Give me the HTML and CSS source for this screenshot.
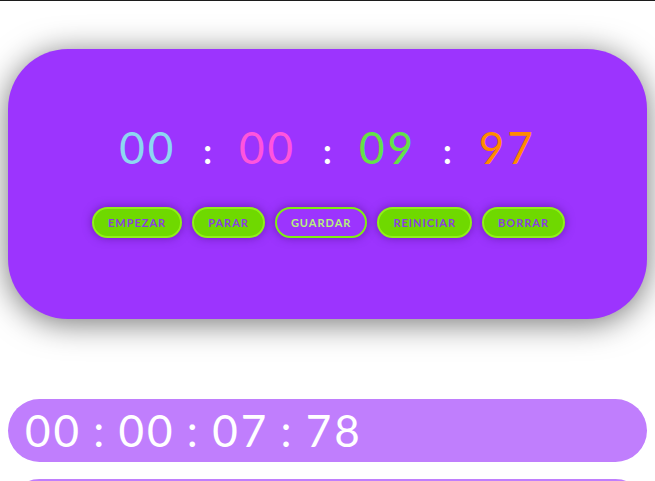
FILE: index.html
```html
<!DOCTYPE html>
<html lang="es">
<head>
<meta charset="utf-8">
<title>Cronómetro</title>
<link rel="stylesheet" href="styles.css">
</head>
<body>
<main class="page">
  <section class="card">
    <div class="clock">
      <span class="num c-blue">00</span>
      <span class="sep">:</span>
      <span class="num c-pink">00</span>
      <span class="sep">:</span>
      <span class="num c-green">09</span>
      <span class="sep">:</span>
      <span class="num c-orange">97</span>
    </div>
    <div class="actions">
      <button class="btn">EMPEZAR</button>
      <button class="btn">PARAR</button>
      <button class="btn btn-outline">GUARDAR</button>
      <button class="btn">REINICIAR</button>
      <button class="btn">BORRAR</button>
    </div>
  </section>
  <ul class="laps">
    <li class="lap">00 : 00 : 07 : 78</li>
    <li class="lap">00 : 00 : 05 : 12</li>
  </ul>
</main>
</body>
</html>
```
FILE: styles.css
```css
html {
  background: #fff;
}
body {
  margin: 0;
  border-top: 1px solid #1c1c1c;
  font-family: "Lato", "Open Sans", sans-serif;
}
.page {
  display: flex;
  flex-direction: column;
  padding: 8px;
}
.card {
  margin-top: 40px;
  height: 270px;
  box-sizing: border-box;
  background: #9c34fe;
  border-radius: 60px;
  box-shadow: 0 4px 32px rgba(0, 0, 0, 0.55);
  display: flex;
  flex-direction: column;
  align-items: center;
  padding-top: 72px;
  gap: 30px;
}
.clock {
  display: flex;
  align-items: baseline;
  gap: 27px;
  font-size: 44px;
  line-height: 52px;
  letter-spacing: 3px;
  font-weight: 400;
}
.num { display: block; }
.sep {
  color: #fff;
  font-size: 34px;
  font-weight: 700;
  letter-spacing: 0;
}
.c-blue { color: #8dd7f1; }
.c-pink { color: #ff55dc; }
.c-green { color: #64e247; }
.c-orange { color: #ff8b00; }
.actions {
  display: flex;
  gap: 10px;
  margin-left: 2px;
}
.btn {
  height: 31px;
  padding: 0 14px;
  border-radius: 16px;
  border: 2px solid #8ff018;
  background: #6fd900;
  color: #8a3de2;
  font-family: "Lato", sans-serif;
  font-weight: 700;
  font-size: 11px;
  letter-spacing: 1px;
  box-shadow: 0 0 10px rgba(60, 0, 110, 0.5);
  cursor: pointer;
}
.btn-outline {
  background: transparent;
  color: #b8f27a;
  border-color: #7fee10;
}
.laps {
  list-style: none;
  margin: 80px 0 0;
  padding: 0;
  display: flex;
  flex-direction: column;
  gap: 17px;
}
.lap {
  height: 63px;
  border-radius: 32px;
  background: #c07efd;
  color: #fff;
  font-size: 44px;
  line-height: 63px;
  padding-left: 17px;
  letter-spacing: 3px;
  word-spacing: -3px;
}
```
